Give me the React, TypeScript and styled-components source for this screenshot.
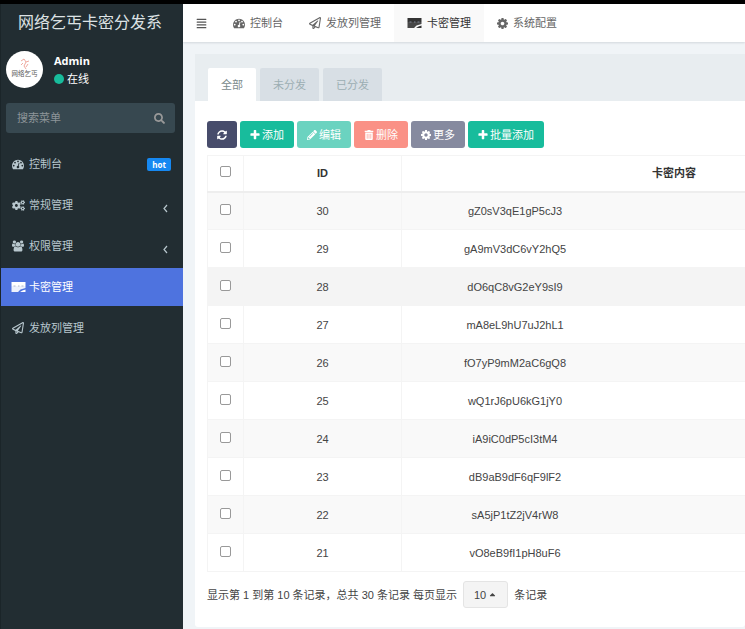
import React from 'react';
import styled, { createGlobalStyle, css } from 'styled-components';
import {
  FaAlignJustify, FaCogs, FaRegPaperPlane, FaSearch, FaSyncAlt, FaPencilAlt, FaTrashAlt, FaCaretUp,
} from 'react-icons/fa';

const Global = createGlobalStyle`
  *, *::before, *::after { box-sizing: border-box; }
  body {
    margin: 0;
    background: #f0f4f7;
    color: #444;
    font: 12px/18px "Liberation Sans", "Noto Sans CJK SC", sans-serif;
    overflow: hidden;
  }
  button, input { font: inherit; }
`;

const Page = styled.div`
  display: flex;
  min-height: 100vh;
  border-top: 4px solid #000;
`;

const Sidebar = styled.aside`
  flex: 0 0 183px;
  min-width: 0;
  background: #222d32;
  border-left: 1px solid #1b2529;
  color: #b8c7ce;
`;

const Brand = styled.h1`
  margin: 0;
  height: 38px;
  padding-right: 4px;
  font-size: 16px;
  font-weight: 400;
  line-height: 38px;
  text-align: center;
  white-space: nowrap;
  color: #dde2e4;
`;

const UserPanel = styled.div`
  display: flex;
  align-items: center;
  gap: 11px;
  padding: 9px 5px 7px;
  color: #fff;
`;

const UserName = styled.div`
  font-family: "Open Sans", sans-serif;
  font-weight: 700;
  font-size: 11px;
`;

const Status = styled.div`
  display: flex;
  align-items: center;
  gap: 3px;
  font-size: 11px;
`;

const Dot = styled.span`
  width: 10px;
  height: 10px;
  border-radius: 50%;
  background: #18bc9c;
`;

const SearchForm = styled.form`
  display: flex;
  align-items: center;
  height: 30px;
  margin: 8px 8px 12px 5px;
  padding: 0 10px 0 11px;
  border-radius: 3px;
  background: #374850;
  color: #999;
`;

const SearchInput = styled.input`
  flex: 1;
  min-width: 0;
  padding: 0;
  border: 0;
  outline: 0;
  background: transparent;
  color: #fff;
  font-size: 11px;
  &::placeholder { color: #8d9599; opacity: 1; }
`;

const PlainButton = styled.button`
  display: flex;
  padding: 0;
  border: 0;
  background: transparent;
  color: inherit;
  font-size: 11px;
`;

const Menu = styled.ul`
  margin: 0;
  padding: 0;
  list-style: none;
`;

const MenuItem = styled.li`
  margin-bottom: 3px;
`;

const MenuLink = styled.a<{ $active?: boolean }>`
  display: flex;
  align-items: center;
  height: 38px;
  padding: 0 12px 0 9px;
  text-decoration: none;
  color: ${(p) => (p.$active ? '#fff' : '#b8c7ce')};
  background: ${(p) => (p.$active ? '#4e73df' : 'transparent')};
`;

const MenuIcon = styled.span`
  display: flex;
  justify-content: center;
  width: 16px;
  margin-right: 3px;
`;

const MenuText = styled.span`
  flex: 1;
  font-size: 11px;
`;

const Hot = styled.span`
  padding: 0 5px;
  border-radius: 2px;
  background: #1688f1;
  color: #fff;
  font: 700 8px/13px "Open Sans", sans-serif;
`;

const Arrow = styled.span`
  display: flex;
  padding: 6px 3px 0 0;
`;

const Main = styled.main`
  flex: 1;
  min-width: 0;
`;

const TopBar = styled.nav`
  display: flex;
  height: 38px;
  background: #fff;
  box-shadow: 0 1px 2px rgba(0, 21, 41, 0.12);
  color: #555;
`;

const Toggle = styled(PlainButton)`
  align-items: center;
  padding: 0 13px;
`;

const TopLink = styled.a<{ $active?: boolean }>`
  display: flex;
  align-items: center;
  gap: 5px;
  padding: 0 13px;
  font-size: 11px;
  text-decoration: none;
  white-space: nowrap;
  color: ${(p) => (p.$active ? '#333' : '#666')};
  background: ${(p) => (p.$active ? '#f9f9f9' : 'transparent')};
`;

const Panel = styled.section`
  margin: 12px 0 0 12px;
  background: #fff;
  border-radius: 3px;
`;

const Tabs = styled.div`
  display: flex;
  gap: 4px;
  padding: 14px 13px 0;
  background: #e8edf0;
`;

const Tab = styled.button<{ $active?: boolean }>`
  height: 33px;
  padding: 0 13px;
  border: 0;
  border-radius: 2px 2px 0 0;
  font-size: 11px;
  color: ${(p) => (p.$active ? '#7b8a8b' : '#9caeb3')};
  background: ${(p) => (p.$active ? '#fff' : '#d8dfe5')};
`;

const PanelBody = styled.div`
  padding: 20px 0 19px 12px;
  overflow: hidden;
`;

const Toolbar = styled.div`
  display: flex;
  gap: 3px;
  margin-bottom: 7px;
`;

const ToolButton = styled.button<{ $bg: string }>`
  display: flex;
  align-items: center;
  gap: 2px;
  height: 27px;
  padding: 0 10px;
  border: 0;
  border-radius: 3px;
  background: ${(p) => p.$bg};
  color: #fff;
  font-size: 11px;
  white-space: nowrap;
`;

const Table = styled.table`
  width: 740px;
  table-layout: fixed;
  border-collapse: collapse;
`;

const cell = css`
  padding: 0;
  border: 1px solid #f4f4f4;
  font-size: 11px;
  text-align: center;
`;

const Th = styled.th<{ $w?: number }>`
  ${cell}
  width: ${(p) => (p.$w ? p.$w + 'px' : 'auto')};
  height: 36px;
  border-bottom: 2px solid #eee;
  color: #333;
`;

const Row = styled.tr<{ $hover?: boolean }>`
  &:nth-child(odd) { background: ${(p) => (p.$hover ? '#f4f4f4' : '#f9f9f9')}; }
`;

const Td = styled.td`
  ${cell}
  height: 38px;
  color: #444;
`;

const Check = styled.input`
  display: block;
  appearance: none;
  width: 11px;
  height: 11px;
  margin: 0 auto 3px;
  border: 1px solid #999;
  border-radius: 2px;
  background: #fff;
  &:checked { background: #4e73df; }
`;

const Code = styled.div`
  width: 210px;
  margin-left: 8px;
`;

const Footer = styled.div`
  display: flex;
  align-items: center;
  gap: 6px;
  margin-top: 9px;
  font-size: 11px;
  white-space: nowrap;
`;

const PageSize = styled.button`
  display: flex;
  align-items: center;
  gap: 2px;
  height: 27px;
  padding: 0 10px;
  border: 1px solid #e4e4e4;
  border-radius: 3px;
  background: #f4f4f4;
  color: #444;
  font-size: 11px;
`;

type IconProps = { size: number };

const GaugeIcon = ({ size }: IconProps) => (
  <svg width={size} height={size} viewBox="0 0 1792 1792" fill="currentColor" aria-hidden="true">
    <path d="M384 1152q0-53-37.500-90.500t-90.500-37.500-90.500 37.500-37.500 90.500 37.500 90.500 90.500 37.500 90.500-37.500 37.500-90.500zm192-448q0-53-37.500-90.500t-90.500-37.500-90.500 37.500-37.500 90.500 37.500 90.500 90.500 37.500 90.500-37.500 37.500-90.500zm428 481l101-382q6-26-7.500-48.500t-38.500-29.500-48 6.500-30 39.500l-101 382q-60 5-107 43.500t-63 98.500q-20 77 20 146t117 89 146-20 89-117q16-60-6-117t-72-91zm660-33q0-53-37.500-90.500t-90.500-37.500-90.500 37.500-37.500 90.500 37.500 90.500 90.500 37.500 90.500-37.500 37.500-90.500zm-640-640q0-53-37.500-90.500t-90.500-37.500-90.500 37.500-37.500 90.500 37.500 90.500 90.500 37.500 90.500-37.500 37.500-90.500zm448 192q0-53-37.500-90.500t-90.500-37.500-90.500 37.500-37.500 90.500 37.500 90.500 90.500 37.500 90.500-37.500 37.500-90.500zm320 448q0 261-141 483-19 29-54 29h-1402q-35 0-54-29-141-221-141-483 0-182 71-348t191-286 286-191 348-71 348 71 286 191 191 286 71 348z" />
  </svg>
);

const GroupIcon = ({ size }: IconProps) => (
  <svg width={size} height={size} viewBox="0 0 1920 1792" fill="currentColor" aria-hidden="true">
    <path d="M593 896q-162 5-265 128h-134q-82 0-138-40.500t-56-118.500q0-353 124-353 6 0 43.500 21t97.500 42.500 119 21.500q67 0 133-23-5 37-5 66 0 139 81 256zM1664 1533q0 120-73 189.500t-194 69.500h-874q-121 0-194-69.500t-73-189.500q0-53 3.500-103.500t14-109 26.500-108.500 43-97.500 62-81 85.500-53.500 111.500-20q10 0 43 21.500t73 48 107 48 135 21.500 135-21.500 107-48 73-48 43-21.500q61 0 111.500 20t85.500 53.500 62 81 43 97.500 26.500 108.500 14 109 3.500 103.500zM640 256q0 106-75 181t-181 75-181-75-75-181 75-181 181-75 181 75 75 181zM1344 640q0 159-112.500 271.500t-271.500 112.500-271.500-112.500-112.500-271.500 112.500-271.500 271.500-112.500 271.500 112.500 112.500 271.500zM1920 865q0 78-56 118.500t-138 40.500h-134q-103-123-265-128 81-117 81-256 0-29-5-66 66 23 133 23 59 0 119-21.500t97.500-42.500 43.500-21q124 0 124 353zM1792 256q0 106-75 181t-181 75-181-75-75-181 75-181 181-75 181 75 75 181z" />
  </svg>
);

const PlusIcon = ({ size }: IconProps) => (
  <svg width={size} height={size} viewBox="128 128 1536 1536" fill="currentColor" aria-hidden="true">
    <path d="M1600 736v192q0 40-28 68t-68 28h-416v416q0 40-28 68t-68 28h-192q-40 0-68-28t-28-68v-416h-416q-40 0-68-28t-28-68v-192q0-40 28-68t68-28h416v-416q0-40 28-68t68-28h192q40 0 68 28t28 68v416h416q40 0 68 28t28 68z" />
  </svg>
);

const CogIcon = ({ size }: IconProps) => (
  <svg width={size} height={size} viewBox="128 128 1536 1536" fill="currentColor" aria-hidden="true">
    <path d="M1152 896q0-106-75-181t-181-75-181 75-75 181 75 181 181 75 181-75 75-181zm512-109v222q0 12-8 23t-20 13l-185 28q-19 54-39 91 35 50 107 138 10 12 10 25t-9 23q-27 37-99 108t-94 71q-12 0-26-9l-138-108q-44 23-91 38-16 136-29 186-7 28-36 28h-222q-14 0-24.500-8.500t-11.500-21.500l-28-184q-49-16-90-37l-141 107q-10 9-25 9-14 0-25-11-126-114-165-168-7-10-7-23 0-12 8-23 15-21 51-66.500t54-70.500q-27-50-41-99l-183-27q-13-2-21-12.500t-8-23.500v-222q0-12 8-23t19-13l186-28q14-46 39-92-40-57-107-138-10-12-10-24 0-10 9-23 26-36 98.500-107.500t94.500-71.500q13 0 26 10l138 107q44-23 91-38 16-136 29-186 7-28 36-28h222q14 0 24.500 8.500t11.500 21.500l28 184q49 16 90 37l142-107q9-9 24-9 13 0 25 10 129 119 165 170 7 8 7 22 0 12-8 23-15 21-51 66.500t-54 70.500q26 50 41 98l183 28q13 2 21 12.500t8 23.500z" />
  </svg>
);

const AngleLeftIcon = () => (
  <svg width="5" height="9" viewBox="0 0 5 9" fill="none" stroke="currentColor" strokeWidth="1.200" aria-hidden="true">
    <path d="M4 1L1 4.500L4 8" />
  </svg>
);

const CardIcon = () => (
  <svg width="15" height="10" viewBox="0 0 30 20" fill="currentColor" aria-hidden="true">
    <path d="M1 0H29V8H1Z" />
    <path d="M1 8H29V12L19 15L14 20H1Z" opacity="0.900" />
    <path d="M29 15V20H18L23 17Z" />
    <path d="M5 8H9M14 8H17M21 8H25" stroke="#9aa4b8" strokeWidth="1.500" />
  </svg>
);

const Avatar = () => (
  <svg width="37" height="37" viewBox="0 0 37 37" role="img" aria-label="网络乞丐">
    <circle cx="18.500" cy="18.500" r="18.500" fill="#fff" />
    <path d="M15 10l3-2 2 3 3-1M20 11l-2 4 2 3M17 12l-2 2M22 13l-2 3" fill="none" stroke="#efaaa0" />
    <text x="18.500" y="25" textAnchor="middle" fontSize="6.500" fill="#555">网络乞丐</text>
  </svg>
);

const menu = [
  { text: '控制台', icon: <GaugeIcon size={12} />, extra: <Hot>hot</Hot> },
  { text: '常规管理', icon: <FaCogs size={13} />, extra: <Arrow><AngleLeftIcon /></Arrow> },
  { text: '权限管理', icon: <GroupIcon size={12} />, extra: <Arrow><AngleLeftIcon /></Arrow> },
  { text: '卡密管理', icon: <CardIcon />, active: true },
  { text: '发放列管理', icon: <FaRegPaperPlane size={12} /> },
];

const topLinks = [
  { text: '控制台', icon: <GaugeIcon size={12} /> },
  { text: '发放列管理', icon: <FaRegPaperPlane size={12} /> },
  { text: '卡密管理', icon: <CardIcon />, active: true },
  { text: '系统配置', icon: <CogIcon size={11} /> },
];

const tools = [
  { text: '添加', icon: <PlusIcon size={10} />, bg: '#18bc9c' },
  { text: '编辑', icon: <FaPencilAlt size={10} />, bg: '#6bd3c0' },
  { text: '删除', icon: <FaTrashAlt size={10} />, bg: '#fa9186' },
  { text: '更多', icon: <CogIcon size={10} />, bg: '#868a9f' },
  { text: '批量添加', icon: <PlusIcon size={10} />, bg: '#18bc9c' },
];

const rows: [number, string][] = [
  [30, 'gZ0sV3qE1gP5cJ3'],
  [29, 'gA9mV3dC6vY2hQ5'],
  [28, 'dO6qC8vG2eY9sI9'],
  [27, 'mA8eL9hU7uJ2hL1'],
  [26, 'fO7yP9mM2aC6gQ8'],
  [25, 'wQ1rJ6pU6kG1jY0'],
  [24, 'iA9iC0dP5cI3tM4'],
  [23, 'dB9aB9dF6qF9lF2'],
  [22, 'sA5jP1tZ2jV4rW8'],
  [21, 'vO8eB9fI1pH8uF6'],
];

export default function App() {
  return (
    <>
      <Global />
      <Page>
        <Sidebar>
          <Brand>网络乞丐卡密分发系</Brand>
          <UserPanel>
            <Avatar />
            <div>
              <UserName>Admin</UserName>
              <Status><Dot />在线</Status>
            </div>
          </UserPanel>
          <SearchForm onSubmit={(e) => e.preventDefault()}>
            <SearchInput type="text" placeholder="搜索菜单" aria-label="搜索菜单" />
            <PlainButton type="submit" aria-label="搜索"><FaSearch /></PlainButton>
          </SearchForm>
          <Menu>
            {menu.map((m) => (
              <MenuItem key={m.text}>
                <MenuLink href="#" $active={m.active}>
                  <MenuIcon>{m.icon}</MenuIcon>
                  <MenuText>{m.text}</MenuText>
                  {m.extra}
                </MenuLink>
              </MenuItem>
            ))}
          </Menu>
        </Sidebar>
        <Main>
          <TopBar>
            <Toggle type="button" aria-label="菜单"><FaAlignJustify /></Toggle>
            {topLinks.map((t) => (
              <TopLink key={t.text} href="#" $active={t.active}>{t.icon}{t.text}</TopLink>
            ))}
          </TopBar>
          <Panel>
            <Tabs role="tablist">
              {['全部', '未分发', '已分发'].map((t, i) => (
                <Tab key={t} type="button" role="tab" aria-selected={i === 0} $active={i === 0}>{t}</Tab>
              ))}
            </Tabs>
            <PanelBody>
              <Toolbar>
                <ToolButton type="button" aria-label="刷新" $bg="#474c6b"><FaSyncAlt size={10} /></ToolButton>
                {tools.map((t) => (
                  <ToolButton key={t.text} type="button" $bg={t.bg}>{t.icon}{t.text}</ToolButton>
                ))}
              </Toolbar>
              <Table>
                <thead>
                  <tr>
                    <Th $w={36}><Check type="checkbox" aria-label="全选" /></Th>
                    <Th $w={158}>ID</Th>
                    <Th>卡密内容</Th>
                  </tr>
                </thead>
                <tbody>
                  {rows.map(([id, code]) => (
                    <Row key={id} $hover={id === 28}>
                      <Td><Check type="checkbox" aria-label={String(id)} /></Td>
                      <Td>{id}</Td>
                      <Td><Code>{code}</Code></Td>
                    </Row>
                  ))}
                </tbody>
              </Table>
              <Footer>
                <span>显示第 1 到第 10 条记录，总共 30 条记录 每页显示</span>
                <PageSize type="button" aria-haspopup="listbox">10 <FaCaretUp size={9} /></PageSize>
                <span>条记录</span>
              </Footer>
            </PanelBody>
          </Panel>
        </Main>
      </Page>
    </>
  );
}
